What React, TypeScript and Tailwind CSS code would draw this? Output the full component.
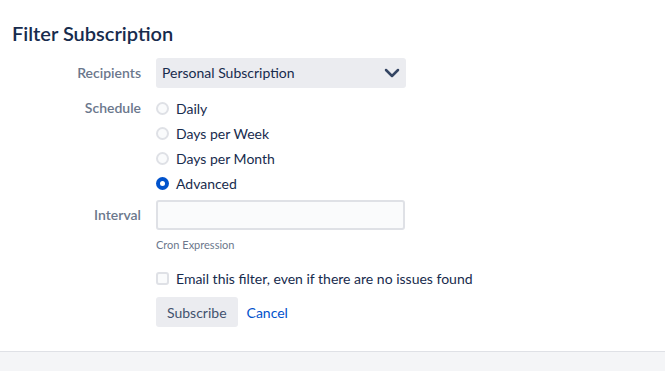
import { ChevronDown } from 'lucide-react';

const font = { fontFamily: 'Lato, "Liberation Sans", sans-serif' };

function Radio({ label, checked }: { label: string; checked?: boolean }) {
  return (
    <label className="flex items-center h-[25px] gap-[7px] text-[14px] text-[#172b4d]">
      {checked ? (
        <span className="shrink-0 w-[13px] h-[13px] rounded-full bg-[#0052cc] flex items-center justify-center">
          <span className="w-[5px] h-[5px] rounded-full bg-white" />
        </span>
      ) : (
        <span className="shrink-0 w-[13px] h-[13px] rounded-full border-2 border-[#dfe1e6] bg-[#fafbfc]" />
      )}
      {label}
    </label>
  );
}

export default function App() {
  return (
    <div className="w-[665px] h-[371px] bg-white flex flex-col" style={font}>
      <div className="flex-1">
        {/* TITLE */}
        <h2 className="pl-[12px] pt-[21px] text-[20px] leading-[24px] font-semibold text-[#172b4d]">
          Filter Subscription
        </h2>

        <div className="grid grid-cols-[141px_250px] gap-x-[15px] mt-[13px]">
          {/* RECIPIENTS */}
          <div className="text-right text-[14px] font-semibold text-[#6b778c] leading-[29px]">Recipients</div>
          <div className="h-[30px] bg-[#ebecf0] rounded-[3px] flex items-center justify-between pl-[6px] pr-[2px] text-[14px] text-[#172b4d]">
            <span className="-mt-[1px]">Personal Subscription</span>
            <ChevronDown size={24} strokeWidth={2.5} className="text-[#344563]" />
          </div>

          {/* SCHEDULE */}
          <div className="text-right text-[14px] font-semibold text-[#6b778c] leading-[23px] mt-[8px]">Schedule</div>
          <div className="flex flex-col mt-[8px]">
            <Radio label="Daily" />
            <Radio label="Days per Week" />
            <Radio label="Days per Month" />
            <Radio label="Advanced" checked />
          </div>

          {/* INTERVAL */}
          <div className="text-right text-[14px] font-semibold text-[#6b778c] leading-[29px] mt-[4px]">Interval</div>
          <div className="mt-[4px]">
            <input className="w-[249px] h-[30px] bg-[#fafbfc] border-2 border-[#dfe1e6] rounded-[3px] outline-none px-[6px] text-[14px]" />
            <div className="text-[11px] text-[#6b778c] mt-[7px] leading-[16px]">Cron Expression</div>
          </div>

          {/* EMAIL */}
          <div />
          <label className="flex items-center gap-[7px] mt-[15px] text-[14px] text-[#172b4d] whitespace-nowrap">
            <span className="shrink-0 w-[13px] h-[13px] rounded-[3px] border-2 border-[#dfe1e6] bg-[#fafbfc]" />
            Email this filter, even if there are no issues found
          </label>

          {/* BUTTONS */}
          <div />
          <div className="flex items-center gap-[9px] mt-[8px]">
            <button className="h-[30px] px-[11px] bg-[#ebecf0] rounded-[3px] text-[14px] text-[#42526e]">Subscribe</button>
            <a className="text-[14px] text-[#0052cc]">Cancel</a>
          </div>
        </div>
      </div>

      {/* FOOTER */}
      <div className="h-[20px] border-t border-[#dfe1e6] bg-[#f4f5f7]" />
    </div>
  );
}
